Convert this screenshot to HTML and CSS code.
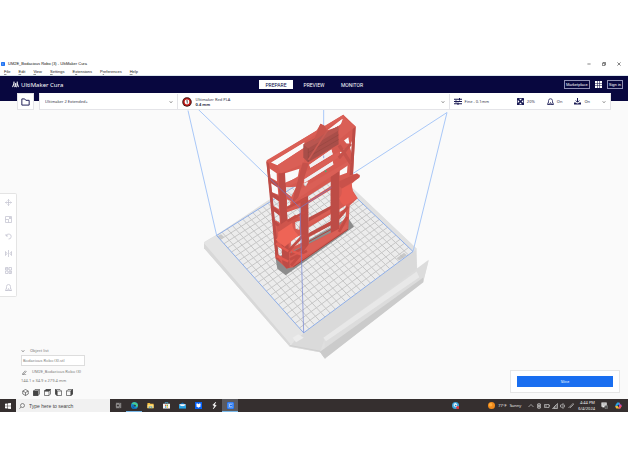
FILE: index.html
```html
<!DOCTYPE html>
<html lang="en">
<head>
<meta charset="utf-8">
<title>UM2E_Bodacious Robo (3) - UltiMaker Cura</title>
<link rel="stylesheet" href="styles.css">
</head>
<body>
<div class="window">
  <div class="titlebar">
    <svg class="app-icon" viewBox="0 0 10 10"><rect width="10" height="10" rx="2" fill="#196ef0"/><path d="M7 3H3v4h4" fill="none" stroke="#9cc3ff" stroke-width="1.2"/></svg>
    <span class="title">UM2E_Bodacious Robo (3) - UltiMaker Cura</span>
    <div class="window-buttons">
      <button aria-label="Minimize"><svg viewBox="0 0 10 10"><path d="M1 5h8"/></svg></button>
      <button aria-label="Restore"><svg viewBox="0 0 10 10"><path d="M1 3h6v6H1zM3 3V1h6v6H7"/></svg></button>
      <button aria-label="Close"><svg viewBox="0 0 10 10"><path d="M1 1l8 8M9 1L1 9"/></svg></button>
    </div>
  </div>
  <nav class="menubar">
    <a href="#"><u>F</u>ile</a><a href="#"><u>E</u>dit</a><a href="#"><u>V</u>iew</a><a href="#"><u>S</u>ettings</a><a href="#">E<u>x</u>tensions</a><a href="#">P<u>r</u>eferences</a><a href="#"><u>H</u>elp</a>
  </nav>
  <header class="header">
    <div class="brand">
      <svg viewBox="0 0 16 14"><path d="M1 13l3.500-9v6c0 3 4 3 4 0V4v6c0 3 3.500 3 3.500 0V4l3 9" fill="none" stroke="#fff" stroke-width="2"/><circle cx="4.500" cy="2" r="1.600" fill="#fff"/><circle cx="12" cy="2" r="1.600" fill="#fff"/></svg>
      <span>UltiMaker Cura</span>
    </div>
    <div class="tabs">
      <button class="tab active">PREPARE</button><button class="tab">PREVIEW</button><button class="tab">MONITOR</button>
    </div>
    <div class="account">
      <button class="outlined">Marketplace</button>
      <button class="apps" aria-label="Apps"><svg viewBox="0 0 14 14" fill="#fff"><path d="M0 0h4v4H0zM5 0h4v4H5zM10 0h4v4h-4zM0 5h4v4H0zM5 5h4v4H5zM10 5h4v4h-4zM0 10h4v4H0zM5 10h4v4H5zM10 10h4v4h-4z"/></svg></button>
      <button class="outlined">Sign in</button>
    </div>
  </header>

  <main class="stage">
    <svg class="scene" viewBox="-570 -12 1884 897" preserveAspectRatio="xMidYMid slice" aria-hidden="true">
      <path d="M42 413L60 402 80 391 404 174 680 433 682 515 716 468 700 532 405 762 390 743 300 727 42 430z" fill="#dfdfdf"/>
      <path d="M42 413L80 393 341 687 312 710 300 727 42 430z" fill="#e4e4e4"/>
      <path d="M42 416L300 717 300 727 42 431z" fill="#d8d8d8"/>
      <path d="M341 687L677 437 682 515 403 706 390 743 300 727 315 708z" fill="#dadada"/>
      <path d="M308 700L325 689 341 700 318 713z" fill="#ececec"/>
      <path d="M403 699L716 466 700 530 405 750z" fill="#dcdcdc"/>
      <path d="M400 700L680 501 688 518 408 710z" fill="#e8e8e8"/>
      <path d="M390 742L700 519 700 533 405 762z" fill="#cbcbcb"/>
      <path d="M300 723L390 740 405 762" fill="none" stroke="#cecece" stroke-width="3"/>
      <path d="M404 174L500 262 680 433 669 441 404 189z" fill="#e0e0e0"/>
      <path d="M80 393L404 189 669 441 341 685z" fill="#ececec"/>
      <g id="grid" stroke="#c6c6c6" stroke-width="3"></g>
      <path d="M620 461l22-16 9 7-23 16zM81 396l12-7 9 8-10 8z" fill="#b9b9b9" opacity=".7"/>
      <path d="M257 462L474 340 492 367 287 512 262 493z" fill="#8c8c8c"/>
      <g fill="none" stroke="#a9c8f8" stroke-width="3">
        <path d="M80 393L-6 18M669 441L771 24M401 10V189M22 12L330 310 771 24"/>
      </g>
      <path d="M80 393L404 189 669 441 341 685z" fill="none" stroke="#8eaee8" stroke-width="3"/>

      <path fill="#d65a51" fill-rule="evenodd" d="M229 170L380 78 392 58 405 65 460 31 497 66 489 209 509 211 509 217 485 238 488 258 503 281 479 303 475 374 310 488 290 492 257 462 247 330z
        M243 174L262 182 343 130 343 113z M412 77L440 68 464 50 457 43z
        M239 192L260 206 261 230 241 219z M243 236L263 249 265 271 246 263z M248 277L266 290 267 314 250 304z M251 319L268 333 270 355 253 346z M261 425L278 435 279 457 263 450z
        M285 206L328 193 323 219 285 235z M288 248L319 247 304 277 288 264z
        M343 224L428 170 430 180 343 235z M358 181L424 135 428 149 361 190z M340 238L355 230 347 248z
        M354 275L424 230 424 244 355 288z M355 297L422 256 422 321 355 355z M355 370L422 329 422 350 355 389z M357 398L422 362 422 385 357 418z
        M291 284L303 290 300 304 291 311z M291 323L334 308 334 333 293 349z M315 352L330 349 328 376 317 373z M303 405L337 390 337 413 302 431z M303 441L336 426 336 433 303 450z
        M462 108L475 98 478 117 470 117z M479 125L487 107 486 150z M449 145L463 133 457 151z M449 190L473 177 471 205 449 213z M449 314L468 302 466 312 448 323z M448 345L468 322 467 337 448 363z"/>
      <g fill="#bd4c46">
        <path d="M229 171L237 178 267 463 276 476 257 462zM265 206L285 204 299 490 289 492 277 477zM331 286L354 274 356 450 336 463zM422 210L448 193 447 383 423 397zM488 73L497 67 489 209 479 213z"/>
        <path d="M238 219L265 237 265 249 240 233zM243 262L268 277 268 290 244 275zM247 304L269 320 269 333 248 317zM251 346L272 363 272 375 252 358z"/>
        <path d="M355 340L423 304 423 324 355 360zM355 386L423 350 423 362 355 397z"/>
      </g>
      <g fill="#da5f56">
        <path d="M229 168L460 31 464 38 239 175zM262 182L342 130 342 177 272 207zM460 38L497 66 448 105 447 76zM288 237L345 203 447 141 449 157 343 224 288 248zM310 266L475 170 477 181 300 298zM355 352L421 314 421 325 355 363zM356 420L472 360 472 372 310 480z"/>
      </g>
      <path d="M358 181L424 135 428 149 361 190zM343 224L428 170 430 180 343 235z" fill="#f1f0f2"/>
      <path d="M340 120L444 65 446 119 354 173 340 159z" fill="#a94e49"/>
      <path d="M340 120L354 132 446 78 444 65z" fill="#b95650"/>
      <path d="M354 145L446 91M354 158L446 105M355 132V172" stroke="#954640" stroke-width="2" fill="none"/>
      <path d="M374 101L391 58 404 64 412 82 370 111z" fill="#c9554d"/>
      <path d="M338 174L356 177 325 278 307 298 311 274zM443 125L452 120 486 174 479 181zM479 117L486 121 450 164 443 157z" fill="#c5514a"/>
      <path d="M412 78L355 166" stroke="#c95a52" stroke-width="5"/>
      <path d="M448 230L501 206 509 213 508 220 456 252 448 245z" fill="#c9514a"/>
      <path d="M455 253L485 237Q484 266 503 281L464 304Q451 295 448 281Q458 269 455 253z" fill="#e65d52"/>
      <path d="M261 367L316 331 326 339 325 347 273 383 260 377z" fill="#cf554c"/>
      <path d="M264 383L307 355Q305 375 326 393L284 427Q268 415 257 405Q268 397 264 383z" fill="#ee6456"/>
      <path d="M300 451L345 427M300 465L351 439M303 483L330 452M291 310L348 282M292 350L345 323M294 441L342 390M446 340L474 307M447 382L472 337" stroke="#c34c45" stroke-width="8" fill="none"/>
      <path d="M305 439L346 455M258 417L295 440M260 455L295 471" stroke="#e1594f" stroke-width="7"/>
      <path d="M357 411L423 375M310 487L474 374" stroke="#ab443e" stroke-width="3"/>
      <path d="M240 223L330 310 424 249M330 310L341 685M401 153v8" fill="none" stroke="#6d7fd4" stroke-width="2.500" opacity=".8"/>
      <circle cx="407" cy="200" r="3" fill="#4da875"/>
    </svg>

    <div class="configbar">
      <button class="open" aria-label="Open file"><svg viewBox="0 0 16 14"><path d="M1.500 12.500v-11h5l2 2.500h6v8.500z" fill="none" stroke="#191953" stroke-width="1.700"/></svg></button>
      <div class="config">
        <div class="printer">
          <select aria-label="Printer"><option>Ultimaker 2 Extended+</option></select>
          <svg class="chevron" viewBox="0 0 8 8"><path d="M1 2l3 4 3-4"/></svg>
        </div>
        <button class="material">
          <svg class="extruder" viewBox="0 0 20 20"><circle cx="10" cy="10" r="9.500" fill="#3a1010"/><circle cx="10" cy="10" r="7.500" fill="#c51d19"/><circle cx="10" cy="10" r="4.800" fill="#fff"/><path d="M8.500 8L10.500 6.700V13" stroke="#333" stroke-width="1.500" fill="none"/></svg>
          <span class="material-text"><span>Ultimaker Red PLA</span><b>0.4 mm</b></span>
          <svg class="chevron" viewBox="0 0 8 8"><path d="M1 2l3 4 3-4"/></svg>
        </button>
        <button class="settings">
          <span class="setting profile"><svg viewBox="0 0 16 14"><path d="M0 2.500h16M0 7h16M0 11.500h16M11 0v5M4 4.500v5M8 9v5" stroke="#191953" stroke-width="2"/></svg>Fine - 0.1mm</span>
          <span class="setting"><svg viewBox="0 0 14 14"><rect width="14" height="14" rx="1" fill="#191953"/><path d="M4 1.500h6L7 5zM4 12.500h6L7 9zM1.500 4v6L5 7zM12.500 4v6L9 7z" fill="#fff"/></svg>20%</span>
          <span class="setting"><svg viewBox="0 0 14 14"><path d="M3 9V5.500a4 4 0 018 0V9M3 8L1 12.500h4L7 9l2 3.500h4L11 8M1 13h12" fill="none" stroke="#191953" stroke-width="1.500"/></svg>On</span>
          <span class="setting"><svg viewBox="0 0 14 14"><path d="M7 0v8M3.500 5L7 8.500 10.500 5" fill="none" stroke="#191953" stroke-width="2"/><path d="M0 9h3l3 2h2l3-2h3v4H0z" fill="#191953"/></svg>On</span>
          <svg class="chevron" viewBox="0 0 8 8"><path d="M1 2l3 4 3-4"/></svg>
        </button>
      </div>
    </div>

    <div class="workspace">
      <div class="left">
        <div class="tools">
          <button aria-label="Move"><svg viewBox="0 0 14 14"><path d="M7 1v12M1 7h12M5 3l2-2 2 2M5 11l2 2 2-2M3 5L1 7l2 2M11 5l2 2-2 2"/></svg></button>
          <button aria-label="Scale"><svg viewBox="0 0 14 14"><path d="M1 1h12v12H1zM1 7h6v6M7 7l4-4M8 3h3v3"/></svg></button>
          <button aria-label="Rotate"><svg viewBox="0 0 14 14"><path d="M2 2v4h4M2.500 6A5 5 0 117 12"/></svg></button>
          <button aria-label="Mirror"><svg viewBox="0 0 14 14"><path d="M7 0v14M1 3v8l3-4zM13 3v8l-3-4z"/></svg></button>
          <button aria-label="Per model settings"><svg viewBox="0 0 14 14"><path d="M1 1h5v5H1zM8 1h5v5H8zM1 8h5v5H1zM8 8h5v5H8zM1 3.500h5M10.500 8v5"/></svg></button>
          <button aria-label="Support blocker"><svg viewBox="0 0 14 14"><path d="M3 9V5a4 4 0 018 0v4M3 8l-2 5h4l2-4 2 4h4l-2-5M1 13h12"/></svg></button>
        </div>
        <section class="objects">
          <button class="objects-title"><svg class="chevron" viewBox="0 0 8 8"><path d="M1 2l3 4 3-4"/></svg>Object list</button>
          <ul><li>Bodacious Robo (3).stl</li></ul>
          <div class="job"><svg viewBox="0 0 12 12"><path d="M2 8l6-6 2 2-6 6H2zM0 11.500h10" fill="none" stroke="#555" stroke-width="1.400"/></svg>UM2E_Bodacious Robo (3)</div>
          <div class="size">144.1 x 34.9 x 279.4 mm</div>
          <div class="views">
            <button aria-label="3D view"><svg viewBox="0 0 14 14"><path d="M7 1l5.500 3v6L7 13l-5.500-3V4zM1.500 4L7 7l5.500-3M7 7v6"/></svg></button>
            <button aria-label="Front view"><svg viewBox="0 0 14 14"><path d="M1 4l3-3h9v9l-3 3H1zM1 4h9v9M10 4l3-3"/><path class="solid" d="M1 4h9v9H1z"/></svg></button>
            <button aria-label="Top view"><svg viewBox="0 0 14 14"><path d="M1 4l3-3h9v9l-3 3H1zM1 4h9v9M10 4l3-3"/><path class="solid" d="M1 4l3-3h9l-3 3z"/></svg></button>
            <button aria-label="Left view"><svg viewBox="0 0 14 14"><path d="M1 1h9l3 3v9H4l-3-3zM4 13V4h9M1 1l3 3"/><path class="solid" d="M1 1l3 3v9l-3-3z"/></svg></button>
            <button aria-label="Right view"><svg viewBox="0 0 14 14"><path d="M1 4l3-3h9v9l-3 3H1zM1 4h9v9M10 4l3-3"/><path class="solid" d="M10 4l3-3v9l-3 3z"/></svg></button>
          </div>
        </section>
      </div>
      <div class="action"><button class="slice">Slice</button></div>
    </div>
  </main>

  <footer class="taskbar">
    <button class="start" aria-label="Start"><svg viewBox="0 0 12 12" fill="#fff"><path d="M0 1.500l5-.7v4.700H0zM6 .7L12 0v5.500H6zM0 6.500h5v4.700l-5-.7zM6 6.500h6V12l-6-.7z"/></svg></button>
    <label class="search"><svg viewBox="0 0 12 12"><circle cx="7" cy="5" r="4"/><path d="M4 8l-3 3.500"/></svg><input type="text" aria-label="Search" placeholder="Type here to search"></label>
    <div class="pinned">
      <button aria-label="Task view"><svg viewBox="0 0 16 16"><path d="M3 5h7v6H3zM3 2v1h7V2M3 14v-1h7v1M13 2v12" fill="none" stroke="#d0d0d0" stroke-width="1.400"/></svg></button>
      <button class="running" aria-label="Edge"><svg viewBox="0 0 16 16"><circle cx="8" cy="8" r="8" fill="#168bd2"/><path d="M1 5a8 8 0 0115 3c0 4-6 4-6 1 1-3-5-6-9-4z" fill="#4bcf8b"/><path d="M7 7c-3 2-1 7 5 7-5 4-10 0-9-4 0-2 2-3 4-3z" fill="#0d5eab"/><circle cx="9" cy="8.500" r="2" fill="#352f2e"/></svg></button>
      <button aria-label="File Explorer"><svg viewBox="0 0 16 16"><path d="M1 2h5l2 2h7v10H1z" fill="#f5bd3c"/><path d="M1 6h14v8H1z" fill="#ffdd7b"/><path d="M4 14v-4h8v4h-2v-2H6v2z" fill="#3c99dc"/></svg></button>
      <button aria-label="Store"><svg viewBox="0 0 16 16"><path d="M5 4V1h6v3" fill="none" stroke="#4ab3e6" stroke-width="1.500"/><path d="M0 4h16v11H0z" fill="#f4f4f4"/><path d="M4.500 6h3v3h-3z" fill="#e85831"/><path d="M8.500 6h3v3h-3z" fill="#72b83a"/><path d="M4.500 10h3v3h-3z" fill="#2d9cdd"/><path d="M8.500 10h3v3h-3z" fill="#f3b822"/></svg></button>
      <button aria-label="Mail"><svg viewBox="0 0 16 16"><path d="M0 6l8-5 8 5v8H0z" fill="#0f6bb8"/><path d="M1 5h14v5H1z" fill="#f0f7fb"/><path d="M0 6l8 5 8-5v9H0z" fill="#27a4e6"/></svg></button>
      <button aria-label="Dropbox"><svg viewBox="0 0 16 16"><path d="M0 0h16v16H0z" fill="#0761f5"/><path d="M5 3l3 2 3-2 3 2-3 2 3 2-6 4-6-4 3-2-3-2z" fill="#fff"/></svg></button>
      <button aria-label="Sketch"><svg viewBox="0 0 16 16"><path d="M11 0L4 7l4 2-3 7 7-8-4-2z" fill="#fff" stroke="#fff"/></svg></button>
      <button class="running current" aria-label="UltiMaker Cura"><svg viewBox="0 0 16 16"><rect width="16" height="16" rx="2" fill="#196ef0"/><path d="M2.500 2.500h11v11h-11z" fill="none" stroke="#c9dcff"/><path d="M10.500 6V5h-5v6h5v-1" fill="none" stroke="#fff" stroke-width="1.500"/></svg></button>
    </div>
    <button class="browser" aria-label="Assistant"><svg viewBox="0 0 16 16"><circle cx="8" cy="8" r="8" fill="#3ba4dc"/><path d="M4 4l4-2 4 3-2 3 2 3-4 1-4-3z" fill="#e8f5fc"/><path d="M6 6l4 1-2 4z" fill="#1878ba"/><circle cx="13" cy="12.500" r="3.500" fill="#e4373d"/></svg></button>
    <div class="weather"><svg viewBox="0 0 16 16"><circle cx="8" cy="8" r="8" fill="#f18b1c"/><circle cx="6" cy="6" r="4" fill="#ffac3b"/></svg><span>77°F</span><span>Sunny</span></div>
    <div class="tray">
      <svg viewBox="0 0 12 12"><path d="M1 8l5-5 5 5"/></svg>
      <svg viewBox="0 0 12 12"><path d="M6 0v2M3 2h6v8H3zM6 10v2M5 4h2v4H5z"/></svg>
      <svg viewBox="0 0 12 12"><path d="M1 3h9v6H1zM10 5h1.500v2M2 6h4"/></svg>
      <svg viewBox="0 0 12 12"><path d="M1 11h10V1zM5 7v4M8 4v7"/></svg>
      <svg viewBox="0 0 12 12"><path d="M1 4h2l3-3v10L3 8H1zM8 3q3 3 0 6"/></svg>
      <svg viewBox="0 0 12 12"><path d="M1 10q3-5 5-1M4 7l6-6 1 2-6 6"/></svg>
    </div>
    <div class="clock"><span>4:44 PM</span><span>6/4/2024</span></div>
    <button class="notify" aria-label="Notifications"><svg viewBox="0 0 16 16"><path d="M1 1h12v10H7l-3 3v-3H1z" fill="#f2f2f2"/><path d="M3 4h8M3 7h8" stroke="#555"/><circle cx="12" cy="11.500" r="4" fill="#555" stroke="#aaa"/></svg></button>
    <button class="copilot" aria-label="Copilot"><svg viewBox="0 0 16 16"><path d="M5 1h5l2 5H7l-3 5H1V7z" fill="#2ba5e4"/><path d="M10 1l3 5h2v4l-3 5H8l2-9z" fill="#c94ad0"/><path d="M1 9h5l4 6H5c-3 0-4-3-4-6z" fill="#f0bc35"/><path d="M12 8l3 1-3 6H8z" fill="#ed5a44"/></svg></button>
  </footer>
</div>
<script src="scene.js"></script>
</body>
</html>
```
FILE: styles.css
```css
* { box-sizing: border-box; }
body {
  margin: 0;
  padding-top: 59px;
  background: #fff;
  color: #33334a;
  font: 4px/6px "Noto Sans", "Open Sans", sans-serif;
}
button, select, input { font: inherit; color: inherit; border: 0; padding: 0; margin: 0; background: none; }
svg { display: block; flex: none; }
a { color: inherit; text-decoration: none; }
ul { list-style: none; margin: 0; padding: 0; }

.titlebar { display: flex; align-items: center; height: 9px; padding: 0 6px 0 1px; color: #111; }
.app-icon { width: 4px; height: 4px; margin-right: 3px; }
.title { flex: 1; font-family: "Liberation Sans", sans-serif; }
.window-buttons { display: flex; gap: 10px; }
.window-buttons svg { width: 4px; height: 4px; fill: none; stroke: #333; stroke-width: 1.500; }
.window-buttons button { width: 5px; }

.menubar { display: flex; gap: 8px; height: 8px; padding: 1px 4px; color: #222; border-bottom: 1px solid #dde8ee; font-family: "Liberation Sans", sans-serif; }
.menubar u { text-decoration-color: #999; }

.header {
  display: grid;
  grid-template-columns: 1fr auto 1fr;
  align-items: center;
  height: 25px;
  padding: 0 5px 8px;
  background: #08073f;
  color: #fff;
}
.brand { display: flex; align-items: center; gap: 2px; padding-left: 7px; font-size: 6px; line-height: 8px; }
.brand svg { width: 7px; height: 7px; }
.tabs { display: flex; gap: 4px; }
.tab { width: 34px; height: 9px; font: 5px/6px Roboto, sans-serif; }
.tab.active { background: #fff; color: #08073f; }
.account { display: flex; align-items: center; justify-content: flex-end; gap: 5px; font-family: "Liberation Sans", sans-serif; }
.outlined { height: 9px; padding: 0 1px; border: 1px solid #8f90b5; }
.apps svg { width: 7px; height: 7px; }

.stage { display: flow-root; position: relative; background: #fafafa; }
.scene { position: absolute; inset: 0; width: 100%; height: 100%; }

.configbar { position: relative; display: flex; gap: 5px; margin-top: -8px; padding: 0 17px; height: 17px; }
.open { display: grid; place-items: center; width: 17px; background: #fff; border: 1px solid #e4e4e8; }
.open svg { width: 9px; height: 8px; }
.config {
  display: grid;
  grid-template-columns: minmax(0, 137fr) minmax(0, 274fr) minmax(0, 161fr);
  flex: 1;
  background: #fff;
  border: 1px solid #e4e4e8;
  border-top-color: #fff;
}
.printer { display: flex; align-items: center; padding: 0 4px 0 5px; }
.printer select { flex: 1; appearance: none; }
.chevron { width: 4px; height: 4px; fill: none; stroke: #777; stroke-width: 1.200; }
.material { display: flex; align-items: center; gap: 4px; padding: 0 4px; text-align: left; border: solid #e4e4e8; border-width: 0 1px; }
.extruder { width: 10px; height: 10px; }
.material-text { flex: 1; display: grid; line-height: 5px; }
.settings { display: flex; align-items: center; gap: 12px; padding: 0 4px; }
.setting { display: flex; align-items: center; gap: 3px; white-space: nowrap; }
.setting svg { width: 7px; height: 7px; }
.setting.profile { flex: 1; }
.setting.profile svg { width: 8px; }

.workspace { position: relative; display: flex; justify-content: space-between; align-items: flex-end; padding: 83px 8px 3px 0; }
.tools { display: grid; width: 17px; background: #fff; border: 1px solid #e4e4e4; border-left: 0; border-radius: 0 2px 2px 0; }
.tools button { display: grid; place-items: center; height: 17px; width: 17px; }
.tools svg { width: 7px; height: 7px; fill: none; stroke: #c3c3d0; stroke-width: 1.500; }
.objects { margin: 50px 0 0 21px; color: #777; }
.objects-title { display: flex; align-items: center; gap: 5px; height: 8px; }
.objects ul { width: 64px; border: 1px solid #ddd; background: #fff; }
.objects li { padding: 2px 1px; height: 9px; line-height: 5px; }
.job { display: flex; align-items: center; gap: 5px; margin-top: 2px; height: 8px; padding-left: 1px; }
.job svg { width: 5px; height: 5px; }
.size { margin-top: 1px; height: 8px; line-height: 8px; }
.views { display: flex; gap: 4px; margin-top: 3px; height: 8px; padding-left: 1px; }
.views svg { width: 7px; height: 7px; fill: none; stroke: #444; stroke-width: 1.300; }
.views button { width: 7px; }
.views .solid { fill: #444; }
.action { width: 110px; margin-bottom: 3px; padding: 5px 6px; background: #fff; border: 1px solid #e6e6e6; }
.slice { display: block; width: 100%; height: 11px; background: #196ef0; color: #fff; }

.taskbar { display: flex; align-items: stretch; height: 13px; background: #352f2f; color: #eee; }
.taskbar button { display: grid; place-items: center; width: 16px; }
.taskbar svg { width: 7px; height: 7px; }
.taskbar .start svg { width: 6px; height: 6px; }
.search { display: flex; align-items: center; gap: 4px; width: 94px; padding-left: 3px; background: #f1f1f1; color: #444; }
.search svg { width: 6px; height: 6px; fill: none; stroke: #444; stroke-width: 1.200; }
.search input { flex: 1; min-width: 0; font-size: 5px; font-family: "Liberation Sans", sans-serif; }
.search input::placeholder { color: #444; opacity: 1; }
.pinned { display: flex; flex: 1; }
.running { border-bottom: 1px solid #79b8e8; }
.taskbar .current { background: #5c5b60; }
.weather { display: flex; align-items: center; gap: 3px; margin: 0 7px 0 25px; }
.tray { display: flex; align-items: center; gap: 2px; }
.tray svg { width: 6px; height: 6px; fill: none; stroke: #ddd; stroke-width: 1.200; }
.clock { display: grid; align-content: center; justify-items: end; margin: 0 1px 0 4px; line-height: 6px; }
.taskbar .copilot { margin-right: 3px; width: 13px; }
```
FILE: scene.js
```js
// Projects the build plate's square grid onto its four corners on screen.
const [a, b, c, d] = [[80, 393], [404, 189], [669, 441], [341, 685]];
const cells = 22;

const dx1 = b[0] - c[0], dx2 = d[0] - c[0], sx = a[0] - b[0] + c[0] - d[0];
const dy1 = b[1] - c[1], dy2 = d[1] - c[1], sy = a[1] - b[1] + c[1] - d[1];
const det = dx1 * dy2 - dx2 * dy1;
const g = (sx * dy2 - dx2 * sy) / det;
const h = (dx1 * sy - sx * dy1) / det;

function project(u, v) {
  const w = g * u + h * v + 1;
  return [0, 1].map(i =>
    ((b[i] - a[i] + g * b[i]) * u + (d[i] - a[i] + h * d[i]) * v + a[i]) / w);
}

const grid = document.getElementById("grid");
function line(from, to) {
  const el = document.createElementNS("http://www.w3.org/2000/svg", "path");
  el.setAttribute("d", `M${from}L${to}`);
  grid.append(el);
}

for (let i = 1; i < cells; i++) {
  const t = i / cells;
  line(project(t, 0), project(t, 1));
  line(project(0, t), project(1, t));
}
```
